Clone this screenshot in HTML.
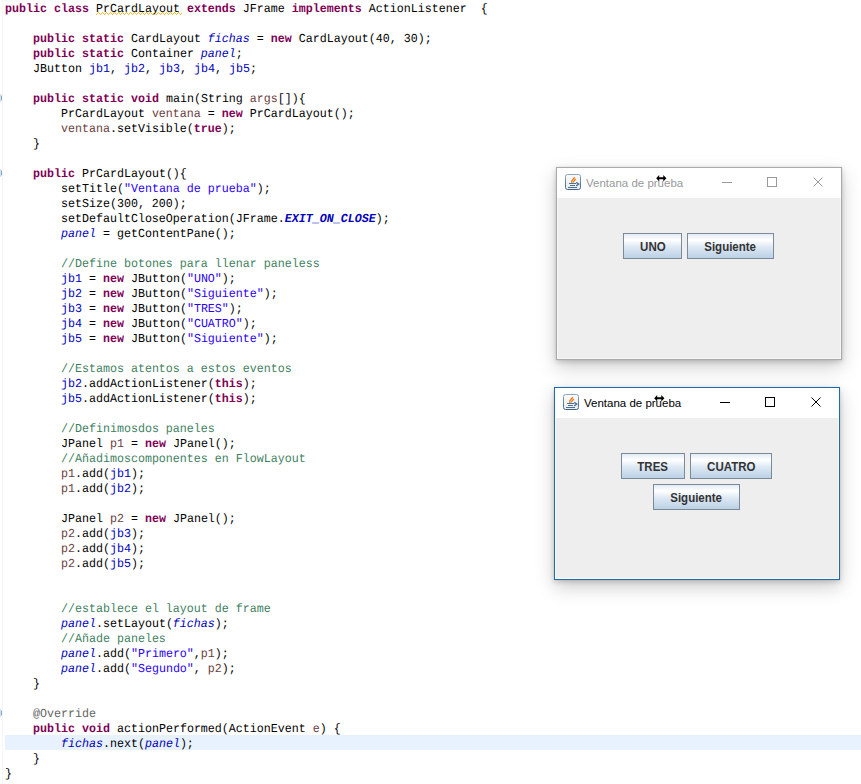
<!DOCTYPE html>
<html><head><meta charset="utf-8"><style>
html,body{margin:0;padding:0;background:#fff;width:861px;height:784px;overflow:hidden;position:relative}
.gut{position:absolute;left:2px;top:0;width:1px;height:784px;background:#f6f6f6}
.hl{position:absolute;left:5px;top:735px;width:856px;height:15px;background:#e8f2fe}
.code{position:absolute;left:0;top:0;width:861px;height:784px}
.ln{position:absolute;left:5px;height:15px;line-height:15px;white-space:pre;text-rendering:geometricPrecision;font-family:"Liberation Mono",monospace;font-size:12.2px;letter-spacing:0px;transform-origin:0 0;transform:scaleX(0.95628);color:#000}
.k{color:#7f0055;font-weight:bold}
.s{color:#2a00ff}
.c{color:#3f7f5f}
.f{color:#0000c0}
i.f{font-style:italic}
b.f{font-weight:bold}
.l{color:#6a3e3e}
.a{color:#646464}
.w{text-decoration:underline wavy #f0c000;text-decoration-thickness:1px;text-underline-offset:2px}
.mk{position:absolute;left:-4px;width:6px;height:8px;border-radius:50%;background:#cfe3f5;border:1px solid #7d9cc0}
.win{position:absolute;width:284px;height:191px;border:1px solid #aaaaaa;background:#fff;box-shadow:0 0 1px rgba(0,0,0,0.12), 0 2px 5px rgba(0,0,0,0.16), 0 7px 18px rgba(0,0,0,0.2)}
.win.act{border-color:#1c6bb0}
.tb{position:absolute;left:0;top:0;width:284px;height:30px;background:#fff}
.jicon{position:absolute;left:8px;top:6px}
.tt{position:absolute;left:29px;top:8px;font-family:"Liberation Sans",sans-serif;font-size:11.5px;line-height:14px;color:#999;white-space:nowrap}
.act .tt{color:#000}
.mn{position:absolute;left:165px;top:14px;width:10px;height:1px;background:#999}
.mx{position:absolute;left:210px;top:9px;width:8px;height:8px;border:1px solid #999}
.cl{position:absolute;left:256px;top:9px;color:#999}
.act .mn{background:#000}
.act .mx{border-color:#000}
.act .cl{color:#000}
.cur{position:absolute;left:99px;top:7px}
.ct{position:absolute;left:0;top:30px;width:284px;height:161px;background:#eeeeee;box-sizing:border-box;border-left:1px solid #f6f6f6;border-right:1px solid #f6f6f6;border-bottom:1px solid #f6f6f6}
.act .ct{border-color:#fcf8f2}
.btn span{display:inline-block;transform:scaleX(0.92);position:relative;top:0px}
.btn{position:absolute;height:24px;border:1px solid #7a8a99;font-family:"Liberation Sans",sans-serif;font-weight:bold;font-size:12.5px;line-height:26px;text-align:center;color:#333;
background:linear-gradient(to bottom,#dde8f3 -1px,#ffffff 6px,#dde8f3 13px,#b8cfe5 25px)}
</style></head><body>
<div class="gut"></div>
<div class="hl"></div>
<div class="code">
<div class="ln" style="top:2px"><b class="k">public</b> <b class="k">class</b> PrCardLayout <b class="k">extends</b> JFrame <b class="k">implements</b> ActionListener  {</div>
<div class="ln" style="top:17px"></div>
<div class="ln" style="top:32px">    <b class="k">public</b> <b class="k">static</b> CardLayout <i class="f">fichas</i> = <b class="k">new</b> CardLayout(40, 30);</div>
<div class="ln" style="top:47px">    <b class="k">public</b> <b class="k">static</b> Container <i class="f">panel</i>;</div>
<div class="ln" style="top:62px">    JButton <span class="f">jb1</span>, <span class="f">jb2</span>, <span class="f">jb3</span>, <span class="f">jb4</span>, <span class="f">jb5</span>;</div>
<div class="ln" style="top:77px"></div>
<div class="ln" style="top:92px">    <b class="k">public</b> <b class="k">static</b> <b class="k">void</b> main(String <span class="l">args</span>[]){</div>
<div class="ln" style="top:107px">        PrCardLayout <span class="l">ventana</span> = <b class="k">new</b> PrCardLayout();</div>
<div class="ln" style="top:122px">        <span class="l">ventana</span>.setVisible(<b class="k">true</b>);</div>
<div class="ln" style="top:137px">    }</div>
<div class="ln" style="top:152px"></div>
<div class="ln" style="top:167px">    <b class="k">public</b> PrCardLayout(){</div>
<div class="ln" style="top:182px">        setTitle(<span class="s">"Ventana de prueba"</span>);</div>
<div class="ln" style="top:197px">        setSize(300, 200);</div>
<div class="ln" style="top:212px">        setDefaultCloseOperation(JFrame.<b class="f"><i>EXIT_ON_CLOSE</i></b>);</div>
<div class="ln" style="top:227px">        <i class="f">panel</i> = getContentPane();</div>
<div class="ln" style="top:242px"></div>
<div class="ln" style="top:257px">        <span class="c">//Define botones para llenar paneless</span></div>
<div class="ln" style="top:272px">        <span class="f">jb1</span> = <b class="k">new</b> JButton(<span class="s">"UNO"</span>);</div>
<div class="ln" style="top:287px">        <span class="f">jb2</span> = <b class="k">new</b> JButton(<span class="s">"Siguiente"</span>);</div>
<div class="ln" style="top:302px">        <span class="f">jb3</span> = <b class="k">new</b> JButton(<span class="s">"TRES"</span>);</div>
<div class="ln" style="top:317px">        <span class="f">jb4</span> = <b class="k">new</b> JButton(<span class="s">"CUATRO"</span>);</div>
<div class="ln" style="top:332px">        <span class="f">jb5</span> = <b class="k">new</b> JButton(<span class="s">"Siguiente"</span>);</div>
<div class="ln" style="top:347px"></div>
<div class="ln" style="top:362px">        <span class="c">//Estamos atentos a estos eventos</span></div>
<div class="ln" style="top:377px">        <span class="f">jb2</span>.addActionListener(<b class="k">this</b>);</div>
<div class="ln" style="top:392px">        <span class="f">jb5</span>.addActionListener(<b class="k">this</b>);</div>
<div class="ln" style="top:407px"></div>
<div class="ln" style="top:422px">        <span class="c">//Definimosdos paneles</span></div>
<div class="ln" style="top:437px">        JPanel <span class="l">p1</span> = <b class="k">new</b> JPanel();</div>
<div class="ln" style="top:452px">        <span class="c">//Añadimoscomponentes en FlowLayout</span></div>
<div class="ln" style="top:467px">        <span class="l">p1</span>.add(<span class="f">jb1</span>);</div>
<div class="ln" style="top:482px">        <span class="l">p1</span>.add(<span class="f">jb2</span>);</div>
<div class="ln" style="top:497px"></div>
<div class="ln" style="top:512px">        JPanel <span class="l">p2</span> = <b class="k">new</b> JPanel();</div>
<div class="ln" style="top:527px">        <span class="l">p2</span>.add(<span class="f">jb3</span>);</div>
<div class="ln" style="top:542px">        <span class="l">p2</span>.add(<span class="f">jb4</span>);</div>
<div class="ln" style="top:557px">        <span class="l">p2</span>.add(<span class="f">jb5</span>);</div>
<div class="ln" style="top:572px"></div>
<div class="ln" style="top:587px"></div>
<div class="ln" style="top:602px">        <span class="c">//establece el layout de frame</span></div>
<div class="ln" style="top:617px">        <i class="f">panel</i>.setLayout(<i class="f">fichas</i>);</div>
<div class="ln" style="top:632px">        <span class="c">//Añade paneles</span></div>
<div class="ln" style="top:647px">        <i class="f">panel</i>.add(<span class="s">"Primero"</span>,<span class="l">p1</span>);</div>
<div class="ln" style="top:662px">        <i class="f">panel</i>.add(<span class="s">"Segundo"</span>, <span class="l">p2</span>);</div>
<div class="ln" style="top:677px">    }</div>
<div class="ln" style="top:692px"></div>
<div class="ln" style="top:707px">    <span class="a">@Override</span></div>
<div class="ln" style="top:722px">    <b class="k">public</b> <b class="k">void</b> actionPerformed(ActionEvent <span class="l">e</span>) {</div>
<div class="ln" style="top:737px">        <i class="f">fichas</i>.next(<i class="f">panel</i>);</div>
<div class="ln" style="top:752px">    }</div>
<div class="ln" style="top:767px">}</div>
</div>
<svg style="position:absolute;left:96px;top:12px" width="86" height="3" fill="#f2bd2a"><rect x="0" y="2" width="1" height="1"/><rect x="1" y="1" width="1" height="1"/><rect x="2" y="0" width="1" height="1"/><rect x="3" y="1" width="1" height="1"/><rect x="4" y="2" width="1" height="1"/><rect x="5" y="1" width="1" height="1"/><rect x="6" y="0" width="1" height="1"/><rect x="7" y="1" width="1" height="1"/><rect x="8" y="2" width="1" height="1"/><rect x="9" y="1" width="1" height="1"/><rect x="10" y="0" width="1" height="1"/><rect x="11" y="1" width="1" height="1"/><rect x="12" y="2" width="1" height="1"/><rect x="13" y="1" width="1" height="1"/><rect x="14" y="0" width="1" height="1"/><rect x="15" y="1" width="1" height="1"/><rect x="16" y="2" width="1" height="1"/><rect x="17" y="1" width="1" height="1"/><rect x="18" y="0" width="1" height="1"/><rect x="19" y="1" width="1" height="1"/><rect x="20" y="2" width="1" height="1"/><rect x="21" y="1" width="1" height="1"/><rect x="22" y="0" width="1" height="1"/><rect x="23" y="1" width="1" height="1"/><rect x="24" y="2" width="1" height="1"/><rect x="25" y="1" width="1" height="1"/><rect x="26" y="0" width="1" height="1"/><rect x="27" y="1" width="1" height="1"/><rect x="28" y="2" width="1" height="1"/><rect x="29" y="1" width="1" height="1"/><rect x="30" y="0" width="1" height="1"/><rect x="31" y="1" width="1" height="1"/><rect x="32" y="2" width="1" height="1"/><rect x="33" y="1" width="1" height="1"/><rect x="34" y="0" width="1" height="1"/><rect x="35" y="1" width="1" height="1"/><rect x="36" y="2" width="1" height="1"/><rect x="37" y="1" width="1" height="1"/><rect x="38" y="0" width="1" height="1"/><rect x="39" y="1" width="1" height="1"/><rect x="40" y="2" width="1" height="1"/><rect x="41" y="1" width="1" height="1"/><rect x="42" y="0" width="1" height="1"/><rect x="43" y="1" width="1" height="1"/><rect x="44" y="2" width="1" height="1"/><rect x="45" y="1" width="1" height="1"/><rect x="46" y="0" width="1" height="1"/><rect x="47" y="1" width="1" height="1"/><rect x="48" y="2" width="1" height="1"/><rect x="49" y="1" width="1" height="1"/><rect x="50" y="0" width="1" height="1"/><rect x="51" y="1" width="1" height="1"/><rect x="52" y="2" width="1" height="1"/><rect x="53" y="1" width="1" height="1"/><rect x="54" y="0" width="1" height="1"/><rect x="55" y="1" width="1" height="1"/><rect x="56" y="2" width="1" height="1"/><rect x="57" y="1" width="1" height="1"/><rect x="58" y="0" width="1" height="1"/><rect x="59" y="1" width="1" height="1"/><rect x="60" y="2" width="1" height="1"/><rect x="61" y="1" width="1" height="1"/><rect x="62" y="0" width="1" height="1"/><rect x="63" y="1" width="1" height="1"/><rect x="64" y="2" width="1" height="1"/><rect x="65" y="1" width="1" height="1"/><rect x="66" y="0" width="1" height="1"/><rect x="67" y="1" width="1" height="1"/><rect x="68" y="2" width="1" height="1"/><rect x="69" y="1" width="1" height="1"/><rect x="70" y="0" width="1" height="1"/><rect x="71" y="1" width="1" height="1"/><rect x="72" y="2" width="1" height="1"/><rect x="73" y="1" width="1" height="1"/><rect x="74" y="0" width="1" height="1"/><rect x="75" y="1" width="1" height="1"/><rect x="76" y="2" width="1" height="1"/><rect x="77" y="1" width="1" height="1"/><rect x="78" y="0" width="1" height="1"/><rect x="79" y="1" width="1" height="1"/><rect x="80" y="2" width="1" height="1"/><rect x="81" y="1" width="1" height="1"/><rect x="82" y="0" width="1" height="1"/><rect x="83" y="1" width="1" height="1"/><rect x="84" y="2" width="1" height="1"/><rect x="85" y="1" width="1" height="1"/></svg>
<div style="position:absolute;left:0;top:94px;width:1px;height:8px;background:#cfe3f3"></div><div style="position:absolute;left:1px;top:95px;width:1px;height:6px;background:#c3d3e3"></div><div style="position:absolute;left:1px;top:96px;width:1px;height:4px;background:#8aa4c0"></div><div style="position:absolute;left:0;top:169px;width:1px;height:8px;background:#cfe3f3"></div><div style="position:absolute;left:1px;top:170px;width:1px;height:6px;background:#c3d3e3"></div><div style="position:absolute;left:1px;top:171px;width:1px;height:4px;background:#8aa4c0"></div><div style="position:absolute;left:0;top:709px;width:1px;height:8px;background:#cfe3f3"></div><div style="position:absolute;left:1px;top:710px;width:1px;height:6px;background:#c3d3e3"></div><div style="position:absolute;left:1px;top:711px;width:1px;height:4px;background:#8aa4c0"></div>
<div class="win" style="left:556px;top:167px"><div class="tb"><svg class="jicon" width="16" height="16" viewBox="0 0 16 16">
<defs><linearGradient id="jb556" x1="0" y1="0" x2="0" y2="1"><stop offset="0" stop-color="#8aa6c0"/><stop offset="1" stop-color="#3e6286"/></linearGradient>
<linearGradient id="jf556" x1="0" y1="0" x2="0" y2="1"><stop offset="0" stop-color="#fafafa"/><stop offset="1" stop-color="#ebebeb"/></linearGradient></defs>
<rect x="0.5" y="0.5" width="15" height="15" rx="2" ry="2" fill="url(#jf556)" stroke="url(#jb556)" stroke-width="1"/>
<path d="M6.9 9 C6.2 7.8 6.6 6.6 7.8 5.4 L9.8 3.2" fill="none" stroke="#ea7d1c" stroke-width="1.4"/>
<path d="M8.2 8.6 C8.2 7.6 9.2 6.8 10.8 5" fill="none" stroke="#ea7d1c" stroke-width="1.3"/>
<rect x="4" y="9" width="7" height="1" fill="#4a7198"/>
<rect x="5" y="11" width="5" height="1" fill="#4a7198"/>
<rect x="3" y="13" width="9" height="1" fill="#4a7198"/>
<path d="M11.2 8.3 L13.7 10 L11.2 11.9" fill="none" stroke="#4a7198" stroke-width="1.4"/>
</svg><span class="tt">Ventana de prueba</span><div class="mn"></div><div class="mx"></div><svg class="cl" width="10" height="10" viewBox="0 0 10 10"><path d="M0.5 0.5 L9.5 9.5 M9.5 0.5 L0.5 9.5" stroke="currentColor" stroke-width="1"/></svg><svg class="cur" width="11" height="7" viewBox="0 0 11 7"><path d="M0.2 3.2 L3.2 0.1 L3.2 2.2 L7.3 2.2 L7.3 0.1 L10.4 3.2 L7.3 6.4 L7.3 4.2 L3.2 4.2 L3.2 6.4 Z" fill="#000"/></svg></div><div class="ct"><div class="btn" style="left:65px;top:35px;width:57px"><span>UNO</span></div><div class="btn" style="left:129px;top:35px;width:85px"><span>Siguiente</span></div></div></div>
<div class="win act" style="left:554px;top:387px"><div class="tb"><svg class="jicon" width="16" height="16" viewBox="0 0 16 16">
<defs><linearGradient id="jb554" x1="0" y1="0" x2="0" y2="1"><stop offset="0" stop-color="#8aa6c0"/><stop offset="1" stop-color="#3e6286"/></linearGradient>
<linearGradient id="jf554" x1="0" y1="0" x2="0" y2="1"><stop offset="0" stop-color="#fafafa"/><stop offset="1" stop-color="#ebebeb"/></linearGradient></defs>
<rect x="0.5" y="0.5" width="15" height="15" rx="2" ry="2" fill="url(#jf554)" stroke="url(#jb554)" stroke-width="1"/>
<path d="M6.9 9 C6.2 7.8 6.6 6.6 7.8 5.4 L9.8 3.2" fill="none" stroke="#ea7d1c" stroke-width="1.4"/>
<path d="M8.2 8.6 C8.2 7.6 9.2 6.8 10.8 5" fill="none" stroke="#ea7d1c" stroke-width="1.3"/>
<rect x="4" y="9" width="7" height="1" fill="#4a7198"/>
<rect x="5" y="11" width="5" height="1" fill="#4a7198"/>
<rect x="3" y="13" width="9" height="1" fill="#4a7198"/>
<path d="M11.2 8.3 L13.7 10 L11.2 11.9" fill="none" stroke="#4a7198" stroke-width="1.4"/>
</svg><span class="tt">Ventana de prueba</span><div class="mn"></div><div class="mx"></div><svg class="cl" width="10" height="10" viewBox="0 0 10 10"><path d="M0.5 0.5 L9.5 9.5 M9.5 0.5 L0.5 9.5" stroke="currentColor" stroke-width="1"/></svg><svg class="cur" width="11" height="7" viewBox="0 0 11 7"><path d="M0.2 3.2 L3.2 0.1 L3.2 2.2 L7.3 2.2 L7.3 0.1 L10.4 3.2 L7.3 6.4 L7.3 4.2 L3.2 4.2 L3.2 6.4 Z" fill="#000"/></svg></div><div class="ct"><div class="btn" style="left:65px;top:35px;width:62px"><span>TRES</span></div><div class="btn" style="left:134px;top:35px;width:80px"><span>CUATRO</span></div><div class="btn" style="left:97px;top:66px;width:85px"><span>Siguiente</span></div></div></div>
</body></html>
